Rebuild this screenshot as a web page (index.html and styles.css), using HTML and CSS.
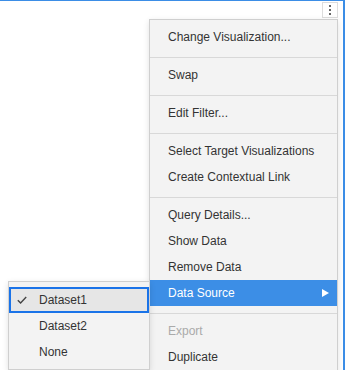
FILE: index.html
```html
<!DOCTYPE html>
<html lang="en">
<head>
  <meta charset="UTF-8" />
  <title>Visualization Menu</title>
  <link rel="stylesheet" href="styles.css">
</head>
<body>
  <div class="panel">
    <button class="kebab" aria-label="Options">
      <span class="dot"></span><span class="dot"></span><span class="dot"></span>
    </button>

    <ul class="menu main-menu">
      <li class="item">Change Visualization...</li>
      <li class="sep"></li>
      <li class="item">Swap</li>
      <li class="sep"></li>
      <li class="item">Edit Filter...</li>
      <li class="sep"></li>
      <li class="item">Select Target Visualizations</li>
      <li class="item">Create Contextual Link</li>
      <li class="sep"></li>
      <li class="item">Query Details...</li>
      <li class="item">Show Data</li>
      <li class="item">Remove Data</li>
      <li class="item active has-sub">Data Source <span class="arrow"></span></li>
      <li class="sep"></li>
      <li class="item disabled">Export</li>
      <li class="item">Duplicate</li>
    </ul>

    <ul class="menu sub-menu">
      <li class="item checked focused">
        <svg class="check" width="10" height="8" viewBox="0 0 10 8">
          <path d="M0.8 4.2 L3.6 7 L9.2 1" fill="none" stroke="#444" stroke-width="1.4" />
        </svg>
        Dataset1
      </li>
      <li class="item">Dataset2</li>
      <li class="item">None</li>
    </ul>
  </div>
</body>
</html>
```

FILE: styles.css
```css
* { margin: 0; padding: 0; box-sizing: border-box; }
body { font-family: 'Liberation Sans', Arial, sans-serif; font-size: 12px; color: #333; background: #fff; }
.panel {
  position: relative; height: 370px; overflow: hidden;
  border-top: 1px solid #3b8de6; border-right: 2px solid #3b8de6; background: #fff;
}
.kebab {
  position: absolute; top: 1px; right: 5px; width: 16px; height: 16px;
  display: flex; flex-direction: column; align-items: center; justify-content: center; gap: 2px;
  background: #fff; border: 1px solid #ddd; cursor: pointer;
}
.dot { display: block; width: 2px; height: 2px; background: #666; }

.menu {
  position: absolute; list-style: none; background: #f3f3f3;
  border: 1px solid #cfcfcf; box-shadow: 0 2px 6px rgba(0,0,0,0.12);
}
.main-menu { top: 18px; right: 5px; width: 189px; padding: 4px 0; }
.sub-menu { top: 280px; left: 8px; width: 142px; padding: 5px 0 4px; z-index: 2; }

.item { position: relative; height: 26px; line-height: 26px; padding: 0 18px; white-space: nowrap; cursor: default; }
.sep { height: 1px; background: #d8d8d8; margin: 7px 0 4px; }
.item.disabled { color: #aaa; }
.item.active { background: #3c8ee6; color: #fff; }
.arrow {
  position: absolute; right: 8px; top: 9px; width: 0; height: 0;
  border-left: 7px solid #fff; border-top: 4px solid transparent; border-bottom: 4px solid transparent;
}

.sub-menu .item { padding-left: 30px; }
.item.focused { background: #e6e6e6; box-shadow: inset 0 0 0 2px #1a73e8; }
.check { position: absolute; left: 8px; top: 9px; }
```
